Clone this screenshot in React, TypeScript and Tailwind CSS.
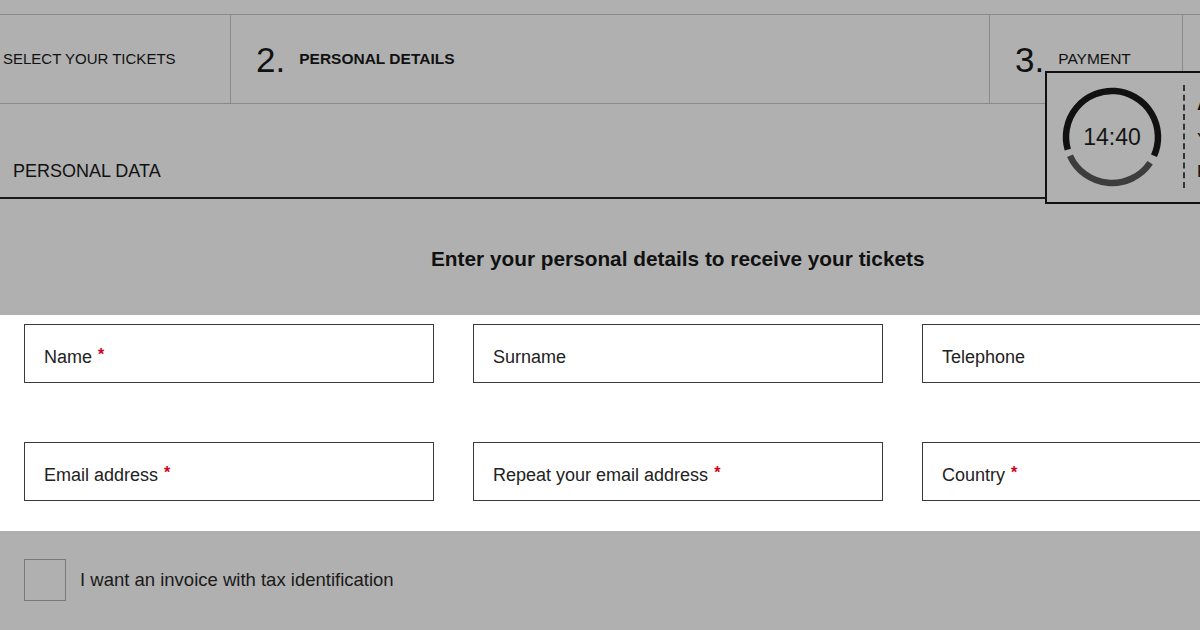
import React from "react";

type Field = { label: string; required?: boolean };

const fields: Field[] = [
  { label: "Name", required: true },
  { label: "Surname" },
  { label: "Telephone" },
  { label: "Email address", required: true },
  { label: "Repeat your email address", required: true },
  { label: "Country", required: true },
];

function StepBar() {
  return (
    <div className="flex h-[89px] border-b border-[#8a8a8a]">
      <div className="w-[231px] shrink-0 flex items-center pl-[3px] border-r border-[#8a8a8a]">
        <span className="text-[15px] uppercase">Select your tickets</span>
      </div>
      <div className="w-[759px] shrink-0 flex items-center pl-[25px] border-r border-[#8a8a8a]">
        <span className="text-[35px] leading-none">2.</span>
        <span className="ml-[14px] text-[15.5px] font-bold uppercase">Personal details</span>
      </div>
      <div className="w-[193px] shrink-0 flex items-center pl-[25px] border-r border-[#8a8a8a]">
        <span className="text-[35px] leading-none">3.</span>
        <span className="ml-[14px] text-[15.5px] uppercase">Payment</span>
      </div>
      <div className="flex-1" />
    </div>
  );
}

function Timer() {
  return (
    <div className="absolute left-[1045px] top-[71px] w-[320px] h-[133px] border-2 border-[#111] bg-[#b0b0b0] flex items-start pl-[13px] pt-[12px]">
      <div className="relative w-[104px] h-[104px] shrink-0">
        <svg width="104" height="104" viewBox="0 0 104 104" fill="none">
          <path d="M7.78 64.68 A46 46 0 1 1 94.02 70.71" stroke="#111" strokeWidth="6.5" />
          <path d="M90.14 77.72 A46 46 0 0 1 9.98 70.71" stroke="#3d3d3d" strokeWidth="6.5" />
        </svg>
        <div className="absolute inset-0 flex items-center justify-center text-[23px] text-[#151515]">14:40</div>
      </div>
      <div className="ml-[19px] h-[103px] border-l-2 border-dashed border-[#333]" />
      <div className="ml-[12px] flex flex-col whitespace-nowrap text-[#111]">
        <span className="text-[20px] font-bold leading-none mt-[8px]">ATTENTION</span>
        <span className="text-[17px] mt-[14px]">Your tickets are reserved</span>
        <span className="text-[17px] mt-[6px]">Please complete your purchase</span>
      </div>
    </div>
  );
}

export default function App() {
  return (
    <div
      className="relative w-[1200px] h-[630px] overflow-hidden bg-[#b0b0b0] text-[#111]"
      style={{ fontFamily: '"Liberation Sans", Arial, sans-serif' }}
    >
      <div className="h-[15px] border-b border-[#8a8a8a]" />
      <StepBar />

      <div className="h-[95px] flex items-end pl-[13px] pb-[12px] border-b-2 border-[#1a1a1a]">
        <span className="text-[18px] uppercase">Personal data</span>
      </div>

      <div className="h-[116px] flex items-center pl-[431px] pt-[4px]">
        <h2 className="text-[20.8px] font-bold whitespace-nowrap">Enter your personal details to receive your tickets</h2>
      </div>

      <div className="h-[216px] bg-white pt-[9px] pl-[24px]">
        <div className="grid grid-cols-[410px_410px_410px] gap-x-[39px] gap-y-[59px]">
          {fields.map((f) => (
            <div key={f.label} className="h-[59px] border border-[#3a3a3a] bg-white flex items-center pl-[19px] pt-[8px]">
              <span className="text-[18px] text-[#222]">{f.label}</span>
              {f.required && <span className="ml-[6px] -mt-[6px] text-[16px] font-bold text-[#d0021b]">*</span>}
            </div>
          ))}
        </div>
      </div>

      <div className="flex items-center pl-[24px] pt-[28px]">
        <div className="w-[42px] h-[42px] border border-[#7a7a7a]" />
        <span className="ml-[14px] text-[18.5px] text-[#1a1a1a]">I want an invoice with tax identification</span>
      </div>

      <Timer />
    </div>
  );
}
